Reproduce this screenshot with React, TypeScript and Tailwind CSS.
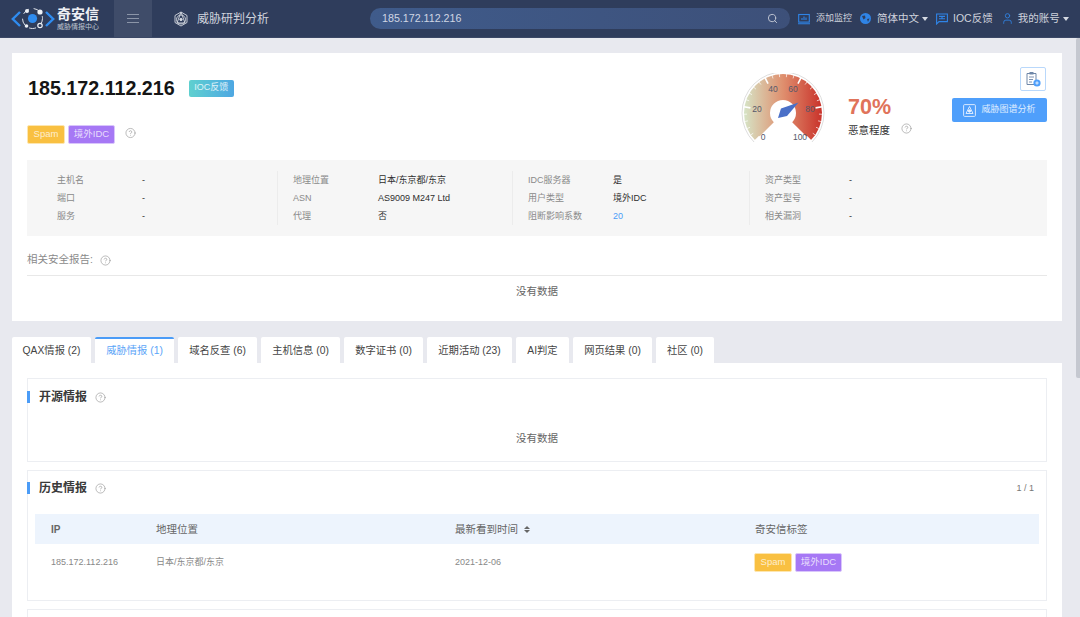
import { CircleHelp, Search, User } from "lucide-react"

const INFO_COLUMNS = [
  {
    width: "w-[250px]",
    rows: [
      ["主机名", "-"],
      ["端口", "-"],
      ["服务", "-"],
    ],
  },
  {
    width: "w-[235px]",
    rows: [
      ["地理位置", "日本/东京都/东京"],
      ["ASN", "AS9009 M247 Ltd"],
      ["代理", "否"],
    ],
  },
  {
    width: "w-[237px]",
    rows: [
      ["IDC服务器", "是"],
      ["用户类型", "境外IDC"],
      ["阻断影响系数", "20"],
    ],
  },
  {
    width: "flex-1",
    rows: [
      ["资产类型", "-"],
      ["资产型号", "-"],
      ["相关漏洞", "-"],
    ],
  },
]

const TABS = [
  { label: "QAX情报 (2)", width: "w-[79px]" },
  { label: "威胁情报 (1)", width: "w-[79px]", active: true },
  { label: "域名反查 (6)", width: "w-[79px]" },
  { label: "主机信息 (0)", width: "w-[79px]" },
  { label: "数字证书 (0)", width: "w-[79px]" },
  { label: "近期活动 (23)", width: "w-[85px]" },
  { label: "AI判定", width: "w-[53px]" },
  { label: "网页结果 (0)", width: "w-[79px]" },
  { label: "社区 (0)", width: "w-[58px]" },
]

function Help({ className = "" }: { className?: string }) {
  return <CircleHelp size={11} strokeWidth={1.3} className={`text-[#8f8f8f] ${className}`} />
}

function Caret() {
  return <span className="ml-[3px] mt-[1px] w-0 h-0 border-x-[3px] border-x-transparent border-t-[4px] border-t-[#d5d9e2]" />
}

function Tags() {
  return (
    <div className="flex gap-[3px] text-[9.5px] text-white/75">
      <span className="h-[18.5px] w-[38px] flex items-center justify-center rounded-[2px] bg-[#f9c041] border border-[#fde6b0]">Spam</span>
      <span className="h-[18.5px] w-[47px] flex items-center justify-center rounded-[2px] bg-[#a678f5] border border-[#d9c6fb]">境外IDC</span>
    </div>
  )
}

function Logo() {
  return (
    <svg width="56" height="30" viewBox="0 0 56 30" fill="none">
      <path d="M20 8 L12.8 15 L20 22" stroke="#2f8cf0" strokeWidth="2.4" />
      <path d="M46 8 L53.2 15 L46 22" stroke="#2f8cf0" strokeWidth="2.4" />
      <circle cx="32.5" cy="14.5" r="10" stroke="#dfe3ea" strokeWidth="1" strokeDasharray="7 5" />
      <circle cx="32.5" cy="14.5" r="4.6" fill="#2f8cf0" />
      <circle cx="40" cy="8" r="2.6" fill="#eef1f6" />
      <circle cx="27" cy="7" r="2" fill="#eef1f6" />
      <circle cx="40" cy="21.5" r="2.2" fill="#2f3d5c" stroke="#eef1f6" strokeWidth="1.2" />
      <circle cx="26.5" cy="22" r="1.8" fill="#eef1f6" />
    </svg>
  )
}

function Gauge() {
  const cx = 42
  const cy = 40
  const point = (r: number, value: number) => {
    const deg = 225 - (value / 100) * 270
    const rad = (deg * Math.PI) / 180
    return [cx + r * Math.cos(rad), cy - r * Math.sin(rad)]
  }
  const [ax, ay] = point(39, 0)
  const [bx, by] = point(39, 100)
  const [hx, hy] = point(13, 100)
  const [ix, iy] = point(13, 0)
  const [ox, oy] = point(41, 0)
  const [px, py] = point(41, 100)
  const ticks = Array.from({ length: 26 }, (_, i) => i * 4)

  return (
    <svg width="84" height="72" viewBox="0 0 84 72" className="shrink-0">
      <defs>
        <linearGradient id="gauge-fill" x1="0" x2="1" y1="0" y2="0">
          <stop offset="0" stopColor="#d6e4c6" />
          <stop offset="0.5" stopColor="#df8f6e" />
          <stop offset="1" stopColor="#c9322a" />
        </linearGradient>
      </defs>
      <path d={`M${ox} ${oy} A41 41 0 1 1 ${px} ${py}`} fill="none" stroke="#dedede" strokeWidth="1" />
      <path
        d={`M${ax} ${ay} A39 39 0 1 1 ${bx} ${by} L${hx} ${hy} A13 13 0 1 0 ${ix} ${iy} Z`}
        fill="url(#gauge-fill)"
      />
      {ticks.map((t) => {
        const major = t % 20 === 0
        const [x1, y1] = point(39.5, t)
        const [x2, y2] = point(major ? 33 : 36, t)
        return <line key={t} x1={x1} y1={y1} x2={x2} y2={y2} stroke="#ffffff" strokeWidth={major ? 1.6 : 0.7} />
      })}
      <g fontFamily="'Liberation Sans', sans-serif" fontSize="8.5" fill="#55586a" textAnchor="middle">
        <text x="16" y="39">20</text>
        <text x="32" y="19">40</text>
        <text x="52" y="19">60</text>
        <text x="69" y="39">80</text>
        <text x="22" y="67">0</text>
        <text x="59" y="67">100</text>
      </g>
      <polygon points="57.5,29.5 46,43 37,45 40,35.5" fill="#4a70c8" />
    </svg>
  )
}

function SectionTitle({ title }: { title: string }) {
  return (
    <div className="flex items-center gap-[8px]">
      <span className="w-[3px] h-[12px] bg-[#4b9cf7]" />
      <span className="ml-[1px] text-[12px] font-bold text-[#3a3a3a] leading-none">{title}</span>
      <Help />
    </div>
  )
}

export default function App() {
  return (
    <div className="relative h-[617px] w-[1080px] overflow-hidden bg-[#e8e9ef] font-['Liberation_Sans','Noto_Sans_CJK_SC',sans-serif]">
      {/* Header */}
      <header className="h-[38px] flex items-center bg-[#2f3d5c] border-b border-[#3b4866] text-[#cfd3dc]">
        <div className="w-[114px] flex items-center">
          <Logo />
          <div className="ml-[1px] flex flex-col leading-none">
            <span className="text-[14px] font-bold text-[#eef0f4]">奇安信</span>
            <span className="mt-[2px] text-[7px] text-[#bfc5d1] whitespace-nowrap">威胁情报中心</span>
          </div>
        </div>
        <div className="w-[38px] h-full flex flex-col items-center justify-center gap-[2.5px] bg-[#3f4c69]">
          <span className="w-[12px] h-[1.5px] bg-[#8b95a8]" />
          <span className="w-[12px] h-[1.5px] bg-[#8b95a8]" />
          <span className="w-[12px] h-[1.5px] bg-[#8b95a8]" />
        </div>
        <svg width="16" height="16" viewBox="0 0 16 16" fill="none" stroke="#d4d8e0" strokeWidth="0.9" className="ml-[21px]">
          <path d="M8 1 L14 4.5 L14 11.5 L8 15 L2 11.5 L2 4.5 Z" />
          <circle cx="8" cy="8.5" r="4.5" />
          <path d="M8 1 L4 12 L12 12 Z" />
          <circle cx="8" cy="8.5" r="1.2" fill="#d4d8e0" />
        </svg>
        <span className="ml-[8px] w-[173px] text-[12px] whitespace-nowrap">威胁研判分析</span>
        <div className="w-[420px] h-[21px] pl-[12px] pr-[12px] flex items-center justify-between rounded-full bg-gradient-to-r from-[#3f5b8b] to-[#3d5079]">
          <span className="text-[10.7px] text-[#cfd6e4]">185.172.112.216</span>
          <Search size={11} strokeWidth={2} className="text-[#c6cbd6]" />
        </div>
        <svg width="12" height="12" viewBox="0 0 12 12" fill="none" stroke="#2f84e6" strokeWidth="1.1" className="ml-[8px]">
          <rect x="0.7" y="1.5" width="10.6" height="7.6" />
          <path d="M0 10.8 H12 M4 7 V5 M6 7 V3.5 M8 7 V4.5" />
        </svg>
        <span className="ml-[6px] text-[9px] whitespace-nowrap">添加监控</span>
        <svg width="11" height="11" viewBox="0 0 11 11" className="ml-[8px]">
          <circle cx="5.5" cy="5.5" r="5.5" fill="#2f84e6" />
          <path d="M2 3 L5 2.5 L5.5 5 L3.5 6.5 Z M7 6 L9.5 5.5 L8 9 Z" fill="#2f3d5c" />
        </svg>
        <span className="ml-[6px] text-[10.5px] whitespace-nowrap">简体中文</span>
        <Caret />
        <svg width="12" height="12" viewBox="0 0 12 12" fill="none" stroke="#2f84e6" strokeWidth="1.1" className="ml-[8px]">
          <path d="M0.6 1 H11.4 V8.6 H3 L0.6 11 Z" />
          <path d="M3 3.4 H9 M3 5.8 H9 M6 3.4 V5.8" />
        </svg>
        <span className="ml-[5px] text-[10.5px] whitespace-nowrap">IOC反馈</span>
        <User size={13} strokeWidth={1.6} className="ml-[8px] text-[#2f84e6]" />
        <span className="ml-[4px] text-[10.5px] whitespace-nowrap">我的账号</span>
        <Caret />
      </header>

      {/* Summary card */}
      <section className="mt-[15px] mx-[12px] w-[1050px] h-[268px] bg-white px-[15px]">
        <div className="h-[107px] flex justify-between">
          <div className="pt-[24px]">
            <div className="flex items-center">
              <h1 className="ml-[1px] text-[19.7px] leading-[22px] font-bold text-[#151515]">185.172.112.216</h1>
              <span className="ml-[14px] h-[17px] w-[45px] flex items-center justify-center rounded-[2px] bg-gradient-to-r from-[#5fd0cf] to-[#4ea7e2] text-[9px] text-white/80">IOC反馈</span>
            </div>
            <div className="mt-[26px] flex items-center">
              <Tags />
              <Help className="ml-[10px] -translate-y-[1.5px]" />
            </div>
          </div>
          <div className="flex">
            <div className="pt-[20px]">
              <Gauge />
            </div>
            <div className="ml-[23px] w-[104px] pt-[42px]">
              <div className="text-[21.5px] leading-[24px] font-bold text-[#e0735a]">70%</div>
              <div className="mt-[5px] flex items-center text-[10.5px] leading-[12px] text-[#333]">
                恶意程度
                <Help className="ml-[11px] -translate-y-[2px]" />
              </div>
            </div>
            <div className="w-[95px] pt-[14px] flex flex-col items-end">
              <div className="mr-[1px] w-[26px] h-[24px] flex items-center justify-center rounded-[2px] border border-[#b9d8fb]">
                <svg width="16" height="16" viewBox="0 0 16 16" fill="none">
                  <path d="M2 2.5 H11 V13.5 H2 Z" stroke="#6f87a8" strokeWidth="1" />
                  <path d="M4.5 1 H8.5 V3.5 H4.5 Z" fill="#6f87a8" />
                  <path d="M4 6 H9 M4 8.5 H8 M4 11 H7" stroke="#6f87a8" strokeWidth="0.9" />
                  <circle cx="12" cy="12" r="3.6" fill="#4f9ffb" />
                  <path d="M10.3 12 H13.7 M12 10.3 V13.7" stroke="#fff" strokeWidth="0.8" />
                </svg>
              </div>
              <div className="mt-[7px] w-[95px] h-[24px] flex items-center justify-center gap-[5px] rounded-[2px] bg-[#4f9ffb] text-[9px] text-white/80">
                <svg width="13" height="13" viewBox="0 0 13 13" fill="none" stroke="#e6f1ff" strokeWidth="0.9">
                  <rect x="0.6" y="0.6" width="11.8" height="11.8" rx="1" />
                  <path d="M6.5 2.5 L3 9.5 H10 Z" />
                  <circle cx="6.5" cy="7" r="1.2" fill="#e6f1ff" />
                </svg>
                威胁图谱分析
              </div>
            </div>
          </div>
        </div>

        <div className="h-[76px] py-[11px] flex bg-[#f6f6f6] text-[9px] leading-[18px]">
          {INFO_COLUMNS.map((col, i) => (
            <div key={i} className={`${col.width} ${i === 0 ? "pl-[30px]" : "pl-[15px] border-l border-[#ececec]"}`}>
              {col.rows.map(([label, value]) => (
                <div key={label} className="flex">
                  <span className={`${i === 3 ? "w-[84px]" : "w-[85px]"} text-[#8a8a8a]`}>{label}</span>
                  <span className={value === "20" ? "text-[#4b9cf7]" : "text-[#2e2e2e]"}>{value}</span>
                </div>
              ))}
            </div>
          ))}
        </div>

        <div className="h-[40px] pt-[9px] flex items-center gap-[7px] border-b border-[#e8e8e8] text-[10.5px] text-[#8a8a8a]">
          相关安全报告:
          <Help />
        </div>
        <div className="pt-[9px] text-center text-[10.5px] leading-[12px] text-[#666]">没有数据</div>
      </section>

      {/* Tabs */}
      <nav className="mt-[16px] ml-[12px] h-[26px] flex gap-[4px] text-[10.3px]">
        {TABS.map((tab) => (
          <div
            key={tab.label}
            className={`${tab.width} flex items-center justify-center rounded-t-[2px] bg-white whitespace-nowrap ${
              tab.active ? "border-t-2 border-[#4b9cf7] text-[#5ba5f8]" : "pt-[2px] text-[#444]"
            }`}
          >
            {tab.label}
          </div>
        ))}
      </nav>

      {/* Threat intel panel */}
      <section className="mx-[12px] w-[1050px] h-[260px] bg-white px-[15px] pt-[15px]">
        <div className="h-[84px] border border-[#eceef2] pt-[12px]">
          <div className="-ml-[1px]">
            <SectionTitle title="开源情报" />
          </div>
          <div className="mt-[29px] text-center text-[10.5px] leading-[12px] text-[#666]">没有数据</div>
        </div>

        <div className="mt-[8px] h-[131px] border border-[#eceef2] pt-[11px]">
          <div className="-ml-[1px] flex items-center justify-between pr-[12px]">
            <SectionTitle title="历史情报" />
            <span className="text-[9px] leading-none text-[#777]">1 / 1</span>
          </div>
          <div className="mt-[20px] mx-[7px] h-[30px] pt-[1px] flex items-center bg-[#edf4fd] text-[10.5px] text-[#666]">
            <span className="pl-[16px] w-[121px] font-bold text-[10px]">IP</span>
            <span className="w-[299px]">地理位置</span>
            <span className="w-[300px] flex items-center gap-[6px]">
              最新看到时间
              <span className="flex flex-col gap-[1px]">
                <span className="w-0 h-0 border-x-[3px] border-x-transparent border-b-[3px] border-b-[#666]" />
                <span className="w-0 h-0 border-x-[3px] border-x-transparent border-t-[3px] border-t-[#666]" />
              </span>
            </span>
            <span>奇安信标签</span>
          </div>
          <div className="mt-[9px] mx-[7px] flex items-center text-[9px] text-[#888]">
            <span className="pl-[16px] pt-[1px] w-[121px]">185.172.112.216</span>
            <span className="pt-[1px] w-[299px]">日本/东京都/东京</span>
            <span className="pt-[1px] w-[299px]">2021-12-06</span>
            <Tags />
          </div>
        </div>

        <div className="mt-[8px] h-[40px] border border-[#eceef2]" />
      </section>

      {/* Scrollbar thumb */}
      <div className="absolute right-0 top-[38px] w-[4px] h-[340px] rounded-l-[2px] bg-[#c5c8d0]" />
    </div>
  )
}
